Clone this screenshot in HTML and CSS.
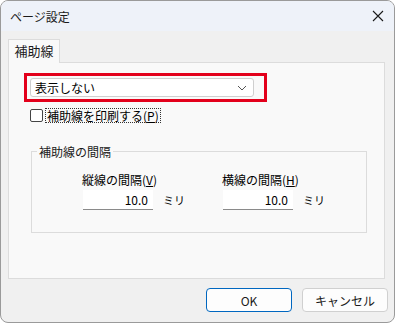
FILE: index.html
```html
<!DOCTYPE html>
<html lang="ja">
<head>
  <meta charset="UTF-8" />
  <title>ページ設定</title>
  <link rel="stylesheet" href="styles.css">
</head>
<body>
  <div class="dialog">
    <div class="titlebar">
      <span class="title">ページ設定</span>
      <svg class="close" width="12" height="12" viewBox="0 0 12 12">
        <path d="M1 1 L11 11 M11 1 L1 11" stroke="#1a1a1a" stroke-width="1.1" fill="none"/>
      </svg>
    </div>

    <div class="content">
      <div class="tabs">
        <div class="tab active">補助線</div>
      </div>
      <div class="panel">
        <div class="highlight">
          <div class="combo">
            <span>表示しない</span>
            <svg width="10" height="6" viewBox="0 0 10 6">
              <path d="M1 1 L5 5 L9 1" stroke="#555" stroke-width="1" fill="none"/>
            </svg>
          </div>
        </div>
        <label class="check">
          <span class="box"></span>
          <span class="check-text">補助線を印刷する(<u>P</u>)</span>
        </label>

        <fieldset class="group">
          <legend>補助線の間隔</legend>
          <div class="spacing">
            <div class="field">
              <div class="field-label">縦線の間隔(<u>V</u>)</div>
              <div class="field-row">
                <div class="num">10.0</div>
                <span class="unit">ミリ</span>
              </div>
            </div>
            <div class="field">
              <div class="field-label">横線の間隔(<u>H</u>)</div>
              <div class="field-row">
                <div class="num">10.0</div>
                <span class="unit">ミリ</span>
              </div>
            </div>
          </div>
        </fieldset>
      </div>

      <div class="buttons">
        <button class="btn primary">OK</button>
        <button class="btn">キャンセル</button>
      </div>
    </div>
  </div>
</body>
</html>
```

FILE: styles.css
```css
* {
  margin: 0; padding: 0; box-sizing: border-box;
  font-family: "Noto Sans CJK JP", "Noto Sans", sans-serif;
}
html, body {
  width: 395px; height: 323px;
  background: #fff;
  overflow: hidden;
}

.dialog {
  width: 395px; height: 323px;
  border: 1px solid #9a9a9a;
  border-radius: 8px;
  background: #f0f0f0;
  overflow: hidden;
  display: flex; flex-direction: column;
}

.titlebar {
  height: 30px;
  background: #eef2f9;
  display: flex; align-items: center;
  justify-content: space-between;
  padding: 0 10px 0 9px;
  flex-shrink: 0;
}
.title { font-size: 12px; color: #1a1a1a; }
.close { margin-top: -1px; }

.content {
  padding: 8px 9px 0 7px;
  display: flex; flex-direction: column;
}

.tabs { display: flex; height: 23px; }
.tab {
  width: 52px; height: 24px;
  background: #f9f9f9;
  border: 1px solid #dcdcdc; border-bottom: none;
  font-size: 13px; color: #1a1a1a;
  text-align: center; line-height: 22px;
  position: relative; z-index: 1;
}

.panel {
  height: 217px;
  background: #f9f9f9;
  border: 1px solid #dcdcdc;
  padding: 10px 0 0 15px;
}

.highlight {
  width: 243px; height: 29px;
  border: 3px solid #e3001b;
  padding: 2px 10px 0 3px;
}
.combo {
  height: 19px;
  background: #fff;
  border: 1px solid #cfcfcf;
  border-radius: 3px;
  display: flex; align-items: center; justify-content: space-between;
  padding: 0 6px 0 4px;
  font-size: 12px; color: #000;
}

.check {
  display: flex; align-items: center;
  margin: 6px 0 0 6px;
  height: 15px;
}
.box {
  width: 13px; height: 13px;
  border: 1px solid #444;
  border-radius: 2px;
  background: #fff;
  margin-right: 2px;
}
.check-text {
  font-size: 12px; color: #000;
  border: 1px dotted #333;
  padding: 0 1px;
  line-height: 13px;
}

.group {
  margin: 20px 0 0 7px;
  width: 336px; height: 90px;
  border: 1px solid #dcdcdc;
  padding: 0;
}
.group legend {
  font-size: 12px; color: #1a1a1a;
  padding: 0 2px;
  margin-left: 5px;
}

.spacing { display: flex; padding: 12px 0 0 50px; }
.field { display: flex; flex-direction: column; width: 140px; }
.field-label { font-size: 12px; color: #000; line-height: 16px; }
.field-row { display: flex; align-items: center; margin-top: 2px; }
.num {
  width: 70px; height: 20px;
  margin-left: 1px;
  background: #fff;
  border-bottom: 1px solid #8a8a8a;
  font-size: 12px; color: #000;
  text-align: right; line-height: 19px;
  padding-right: 5px;
}
.unit { font-size: 11px; color: #000; margin-left: 10px; }

.buttons {
  display: flex; justify-content: flex-end; gap: 10px;
  margin: 9px -3px 0 0;
}
.btn {
  width: 86px; height: 24px;
  background: #fdfdfd;
  border: 1px solid #d0d0d0;
  border-radius: 4px;
  font-size: 12px; color: #1a1a1a;
}
.btn.primary { border-color: #0067c0; }
```
